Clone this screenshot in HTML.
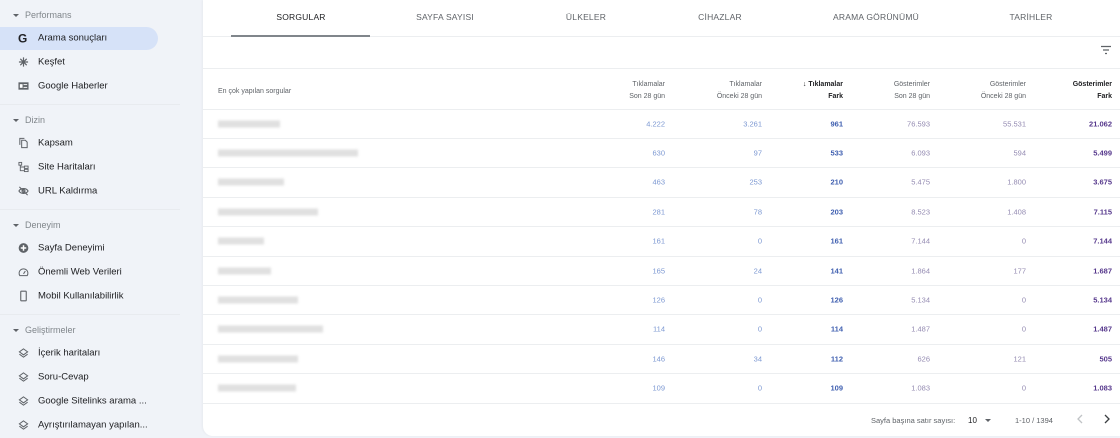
<!DOCTYPE html>
<html><head><meta charset="utf-8"><style>
*{margin:0;padding:0;box-sizing:border-box}
body{width:1120px;height:438px;overflow:hidden;background:#f0f3f8;font-family:"Liberation Sans",Arial,sans-serif;position:relative}
.sb{position:absolute;left:0;top:0;width:203px;height:438px}
.h{position:absolute;left:13px;font-size:9px;color:#80868b}
.h:before{content:"";display:inline-block;border-left:3px solid transparent;border-right:3px solid transparent;border-top:3.5px solid #5f6368;margin-right:6px;vertical-align:1px}
.it{position:absolute;left:38px;font-size:9.5px;color:#202124;transform:translateY(-50%)}
.ic{position:absolute;left:18px;width:11px;height:11px;transform:translateY(-50%)}
.dv{position:absolute;left:0;width:180px;height:1px;background:#e8ebef}
.act{position:absolute;left:0;top:27px;width:158px;height:23px;background:#d6e2f8;border-radius:0 12px 12px 0}
.main{position:absolute;left:203px;top:0;width:917px;height:436px;background:#fff;border-radius:0 0 0 10px;box-shadow:-1px 0 2px rgba(0,0,0,.04)}
.tab{position:absolute;top:12px;font-size:8.5px;color:#5f6368;transform:translateX(-50%);letter-spacing:.2px}
.line{position:absolute;left:0;right:0;height:1px;background:#eceef0}
.th{position:absolute;top:79px;font-size:7px;color:#5f6368;text-align:right;line-height:12px}
.cell{position:absolute;font-size:7.5px;text-align:right;transform:translateY(-50%)}
.blur{position:absolute;left:15px;height:7px;background:#e0e0e0;filter:blur(1.3px);transform:translateY(-50%)}
</style></head><body>
<div class="sb">
<div class="h" style="top:10px">Performans</div>
<div class="act"></div>
<svg class="ic" style="top:38px" viewBox="0 0 12 12"><text x="0" y="11" font-size="13" font-weight="bold" font-family="Liberation Sans" fill="#202124">G</text></svg>
<div class="it" style="top:38px">Arama sonuçları</div>
<svg class="ic" style="top:62px" viewBox="0 0 12 12" stroke="#5f6368" stroke-width="1.3"><path d="M6 1v10M1 6h10M2.5 2.5l7 7M9.5 2.5l-7 7"/></svg>
<div class="it" style="top:62px">Keşfet</div>
<svg class="ic" style="top:86px" viewBox="0 0 12 12"><rect x="0.5" y="2" width="11" height="8" fill="#5f6368"/><rect x="2" y="4" width="3" height="4" fill="#fff"/><rect x="6" y="4" width="4" height="1" fill="#fff"/><rect x="6" y="7" width="4" height="1" fill="#fff"/></svg>
<div class="it" style="top:86px">Google Haberler</div>
<div class="dv" style="top:104px"></div>
<div class="h" style="top:115px">Dizin</div>
<svg class="ic" style="top:143px" viewBox="0 0 12 12" fill="none" stroke="#5f6368" stroke-width="1.1"><path d="M2 8V1h5M4 3h4l2 2v6H4z"/></svg>
<div class="it" style="top:143px">Kapsam</div>
<svg class="ic" style="top:167px" viewBox="0 0 12 12" fill="none" stroke="#5f6368" stroke-width="1"><rect x="1" y="1" width="3" height="3"/><rect x="7" y="5" width="4" height="2.5"/><rect x="7" y="8.5" width="4" height="2.5"/><path d="M2.5 4v6h4.5M2.5 6h4.5"/></svg>
<div class="it" style="top:167px">Site Haritaları</div>
<svg class="ic" style="top:191px" viewBox="0 0 12 12" fill="none" stroke="#5f6368" stroke-width="1.2"><path d="M1 6c2-3.5 8-3.5 10 0c-2 3.5-8 3.5-10 0z"/><circle cx="6" cy="6" r="1.6"/><path d="M1.5 1.5l9 9"/></svg>
<div class="it" style="top:191px">URL Kaldırma</div>
<div class="dv" style="top:209px"></div>
<div class="h" style="top:220px">Deneyim</div>
<svg class="ic" style="top:248px" viewBox="0 0 12 12"><circle cx="6" cy="6" r="5.3" fill="#5f6368"/><path d="M6 3v6M3 6h6" stroke="#fff" stroke-width="1.6"/></svg>
<div class="it" style="top:248px">Sayfa Deneyimi</div>
<svg class="ic" style="top:272px" viewBox="0 0 12 12" fill="none" stroke="#5f6368" stroke-width="1.1"><path d="M2 10A4.8 4.8 0 1 1 10 10z"/><path d="M6 8l2-3"/></svg>
<div class="it" style="top:272px">Önemli Web Verileri</div>
<svg class="ic" style="top:296px" viewBox="0 0 12 12" fill="none" stroke="#5f6368" stroke-width="1.2"><rect x="3" y="0.8" width="6" height="10.4" rx=".6"/></svg>
<div class="it" style="top:296px">Mobil Kullanılabilirlik</div>
<div class="dv" style="top:314px"></div>
<div class="h" style="top:325px">Geliştirmeler</div>
<svg class="ic" style="top:353px" viewBox="0 0 12 12" fill="none" stroke="#5f6368" stroke-width="1.1"><path d="M6 1.5l4.5 3.3L6 8 1.5 4.8zM1.5 7.3L6 10.5l4.5-3.2"/></svg>
<div class="it" style="top:353px">İçerik haritaları</div>
<svg class="ic" style="top:377px" viewBox="0 0 12 12" fill="none" stroke="#5f6368" stroke-width="1.1"><path d="M6 1.5l4.5 3.3L6 8 1.5 4.8zM1.5 7.3L6 10.5l4.5-3.2"/></svg>
<div class="it" style="top:377px">Soru-Cevap</div>
<svg class="ic" style="top:401px" viewBox="0 0 12 12" fill="none" stroke="#5f6368" stroke-width="1.1"><path d="M6 1.5l4.5 3.3L6 8 1.5 4.8zM1.5 7.3L6 10.5l4.5-3.2"/></svg>
<div class="it" style="top:401px">Google Sitelinks arama ...</div>
<svg class="ic" style="top:425px" viewBox="0 0 12 12" fill="none" stroke="#5f6368" stroke-width="1.1"><path d="M6 1.5l4.5 3.3L6 8 1.5 4.8zM1.5 7.3L6 10.5l4.5-3.2"/></svg>
<div class="it" style="top:425px">Ayrıştırılamayan yapılan...</div>
</div>

<div class="main">
<div class="tab" style="left:98px;color:#202124">SORGULAR</div>
<div class="tab" style="left:242px">SAYFA SAYISI</div>
<div class="tab" style="left:383px">ÜLKELER</div>
<div class="tab" style="left:517px">CİHAZLAR</div>
<div class="tab" style="left:673px">ARAMA GÖRÜNÜMÜ</div>
<div class="tab" style="left:828px">TARİHLER</div>
<div class="line" style="top:36px"></div>
<div style="position:absolute;left:28px;top:35px;width:139px;height:2px;background:#80868b"></div>
<svg style="position:absolute;left:897px;top:45px" width="12" height="10" viewBox="0 0 12 10" stroke="#5f6368" stroke-width="1.2"><path d="M1 1.5h10M3 5h6M5 8.5h2"/></svg>
<div class="line" style="top:68px"></div>
<div style="position:absolute;left:15px;top:88px;font-size:7px;color:#5f6368">En çok yapılan sorgular</div>
<div class="th" style="right:455px">Tıklamalar<br>Son 28 gün</div>
<div class="th" style="right:358px">Tıklamalar<br>Önceki 28 gün</div>
<div class="th" style="right:277px;color:#202124;font-weight:bold">↓ Tıklamalar<br>Fark</div>
<div class="th" style="right:190px">Gösterimler<br>Son 28 gün</div>
<div class="th" style="right:94px">Gösterimler<br>Önceki 28 gün</div>
<div class="th" style="right:8px;color:#202124;font-weight:bold">Gösterimler<br>Fark</div>
<div class="line" style="top:109px"></div>
<div id="rows"></div>
<div style="position:absolute;left:668px;top:416px;font-size:7.5px;color:#5f6368">Sayfa başına satır sayısı:</div>
<div style="position:absolute;left:765px;top:416px;font-size:8px;color:#202124">10</div>
<div style="position:absolute;left:782px;top:419px;border-left:3px solid transparent;border-right:3px solid transparent;border-top:3.5px solid #5f6368"></div>
<div style="position:absolute;left:812px;top:416px;font-size:7.5px;color:#5f6368">1-10 / 1394</div>
<svg style="position:absolute;left:873px;top:414px" width="8" height="10" viewBox="0 0 8 10" fill="none" stroke="#c0c3c6" stroke-width="1.3"><path d="M6 1L2 5l4 4"/></svg>
<svg style="position:absolute;left:900px;top:414px" width="8" height="10" viewBox="0 0 8 10" fill="none" stroke="#3c4043" stroke-width="1.3"><path d="M2 1l4 4-4 4"/></svg>
</div>
<script>
var d=[[62,"4.222","3.261","961","76.593","55.531","21.062"],[140,"630","97","533","6.093","594","5.499"],[66,"463","253","210","5.475","1.800","3.675"],[100,"281","78","203","8.523","1.408","7.115"],[46,"161","0","161","7.144","0","7.144"],[53,"165","24","141","1.864","177","1.687"],[80,"126","0","126","5.134","0","5.134"],[105,"114","0","114","1.487","0","1.487"],[80,"146","34","112","626","121","505"],[78,"109","0","109","1.083","0","1.083"]];
var R=[455,358,277,190,94,8],C=["#7c98d2","#7c98d2","#3f5fb0","#948bb2","#948bb2","#56388c"],h="";
d.forEach(function(r,i){var cy=123.5+i*29.4;h+='<div class="blur" style="top:'+cy+'px;width:'+r[0]+'px"></div>';
for(var j=0;j<6;j++)h+='<div class="cell" style="top:'+cy+'px;right:'+R[j]+'px;color:'+C[j]+(j==2||j==5?';font-weight:bold':'')+'">'+r[j+1]+'</div>';
h+='<div class="line" style="top:'+(138+i*29.4)+'px"></div>';});
document.getElementById("rows").innerHTML=h;
</script>
</body></html>
